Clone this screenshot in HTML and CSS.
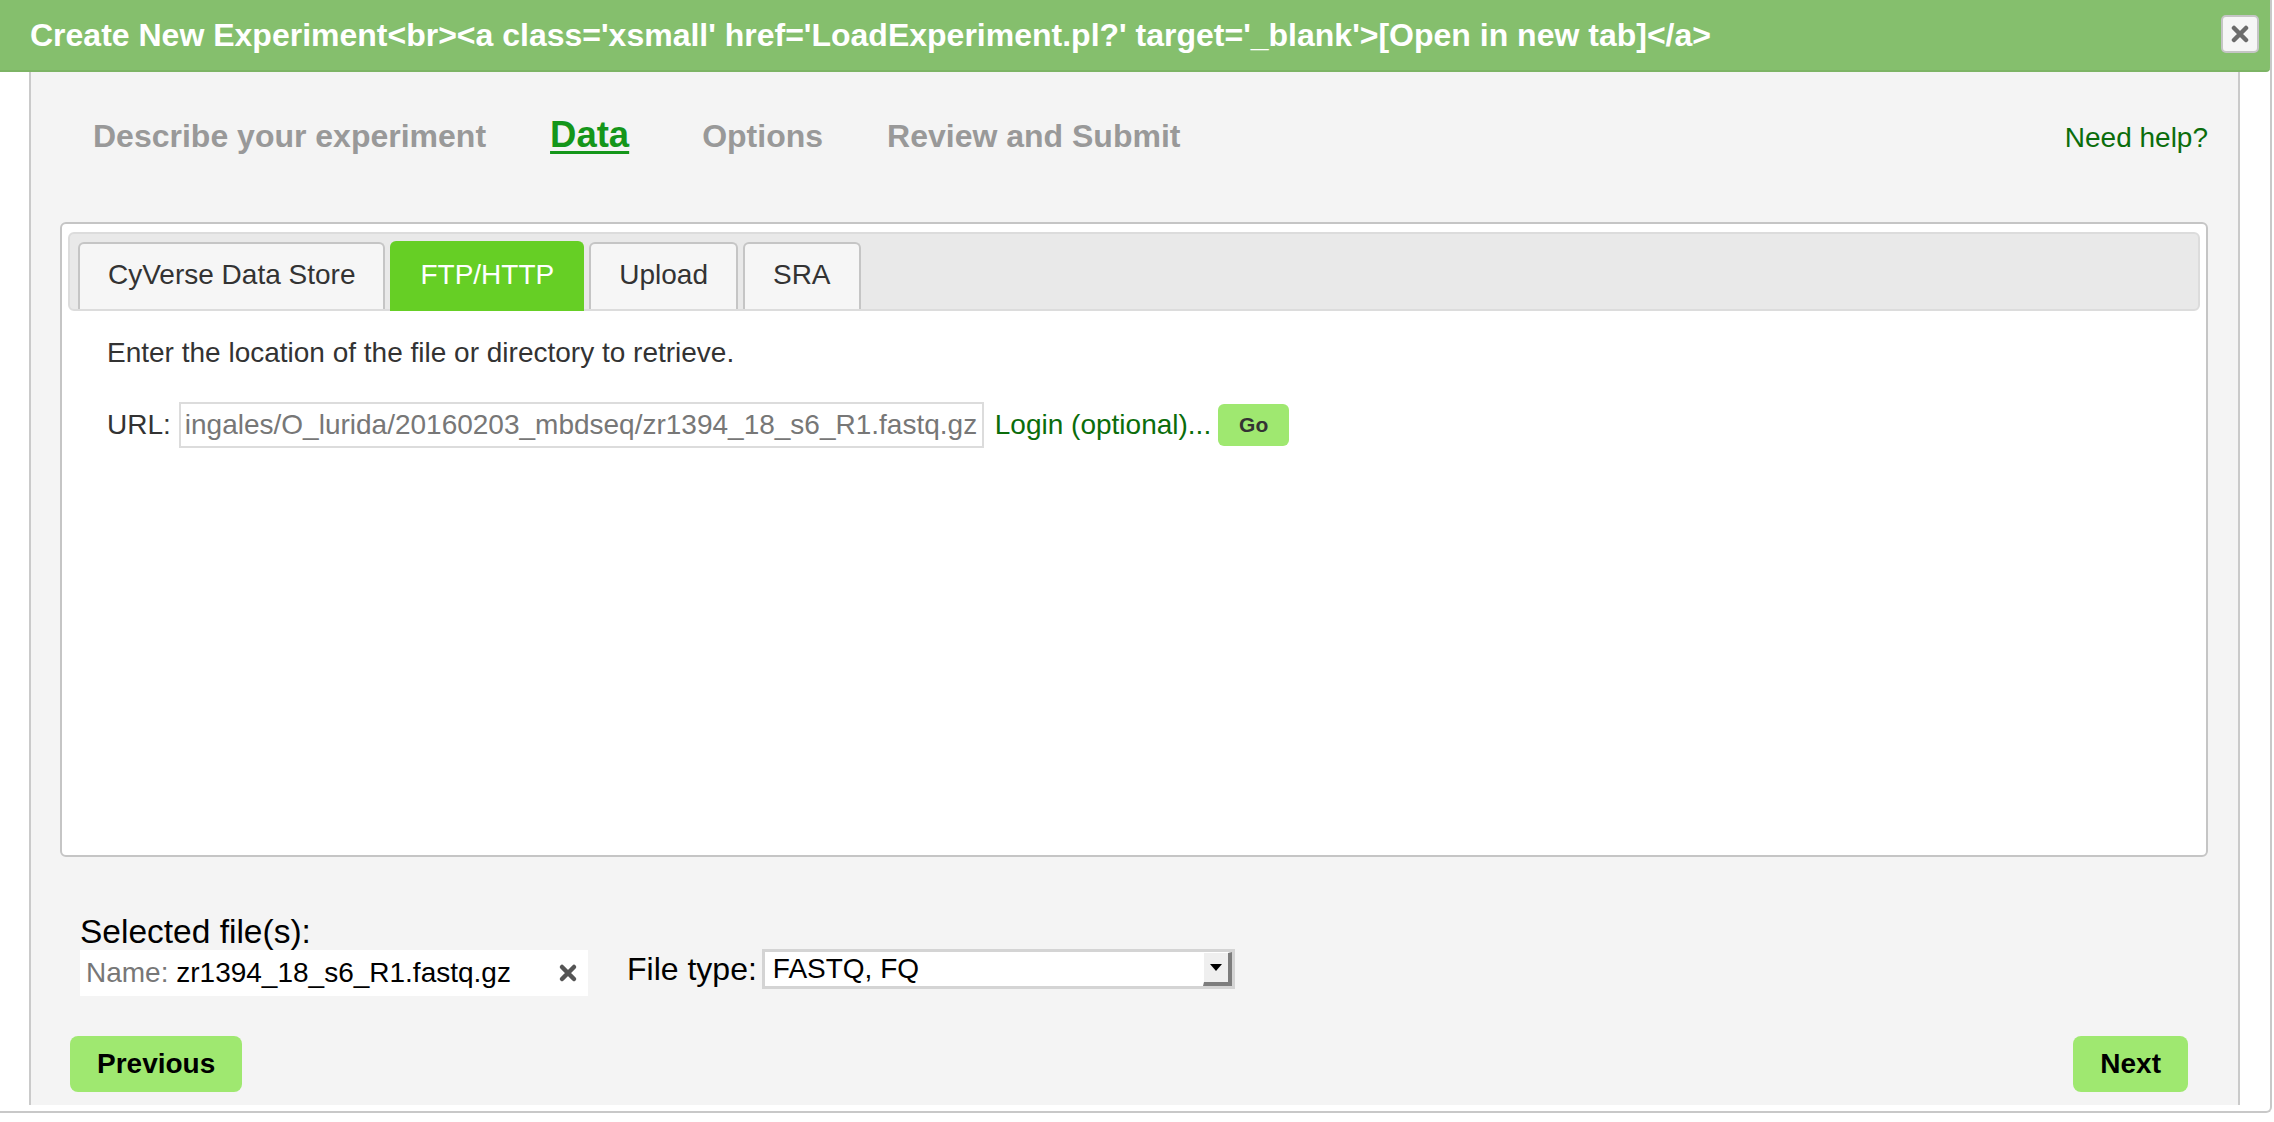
FILE: index.html
```html
<!DOCTYPE html>
<html>
<head>
<meta charset="utf-8">
<title>Create New Experiment</title>
<link rel="stylesheet" href="styles.css">
</head>
<body>
<div class="dialog">
  <div class="titlebar">
    <span class="title">Create New Experiment&lt;br&gt;&lt;a class='xsmall' href='LoadExperiment.pl?' target='_blank'&gt;[Open in new tab]&lt;/a&gt;</span>
    <button class="close" type="button" aria-label="close">
      <svg width="18" height="18" viewBox="0 0 18 18"><path d="M3 3 L15 15 M15 3 L3 15" stroke="#6b6b6b" stroke-width="4.5" stroke-linecap="round"/></svg>
    </button>
  </div>
  <div class="content">
    <div class="steps">
      <span class="step step-describe">Describe your experiment</span>
      <span class="step step-active">Data</span>
      <span class="step step-options">Options</span>
      <span class="step">Review and Submit</span>
      <span class="help">Need help?</span>
    </div>
    <div class="tabs">
      <ul class="tabnav">
        <li class="tab">CyVerse Data Store</li>
        <li class="tab tab-active">FTP/HTTP</li>
        <li class="tab">Upload</li>
        <li class="tab">SRA</li>
      </ul>
      <div class="panel">
        <p class="intro">Enter the location of the file or directory to retrieve.</p>
        <div class="urlrow">
          <span class="urllabel">URL:</span>
          <div class="urlinput">ingales/O_lurida/20160203_mbdseq/zr1394_18_s6_R1.fastq.gz</div>
          <span class="login">Login (optional)...</span>
          <button class="go" type="button">Go</button>
        </div>
      </div>
    </div>
    <div class="selected">Selected file(s):</div>
    <div class="filerow">
      <div class="namebox">
        <span class="namelabel">Name:</span>&nbsp;<span class="filename">zr1394_18_s6_R1.fastq.gz</span>
        <svg class="remove" width="20" height="20" viewBox="0 0 20 20"><path d="M4 4 L16 16 M16 4 L4 16" stroke="#555" stroke-width="4.5" stroke-linecap="round"/></svg>
      </div>
      <span class="typelabel">File type:</span>
      <div class="select">
        <span class="selvalue">FASTQ, FQ</span>
        <span class="selarrow"><span class="tri"></span></span>
      </div>
    </div>
    <div class="buttons">
      <button class="btn" type="button">Previous</button>
      <button class="btn" type="button">Next</button>
    </div>
  </div>
</div>
</body>
</html>
```
FILE: styles.css
```css
* { box-sizing: border-box; }
html, body { margin: 0; padding: 0; background: #fff; }
body { font-family: "Liberation Sans", Arial, Helvetica, sans-serif; color: #333; }

.dialog {
  width: 2272px;
  height: 1113px;
  display: flex;
  flex-direction: column;
  border-right: 2px solid #c8c8c8;
  border-bottom: 2px solid #c8c8c8;
  border-bottom-right-radius: 6px;
}

.titlebar {
  height: 72px;
  flex: none;
  background: #85bf6d;
  border-bottom: 2px solid #7db465;
  border-bottom-right-radius: 4px;
  display: flex;
  align-items: center;
  justify-content: space-between;
  padding: 0 11px 0 30px;
}
.title { color: #fff; font-weight: bold; font-size: 32px; white-space: nowrap; }
.close {
  width: 38px; height: 38px;
  margin-top: -2px;
  background: #f6f6f6;
  border: 2px solid #c5c5c5;
  border-radius: 5px;
  display: flex; align-items: center; justify-content: center;
  padding: 0;
}

.content {
  flex: 1;
  margin: 0 30px 6px 29px;
  background: #f4f4f4;
  border-left: 2px solid #cacaca;
  border-right: 2px solid #cacaca;
  padding: 0 30px 0 29px;
}

.steps {
  display: flex;
  align-items: baseline;
  padding: 42px 0 0 33px;
}
.step { font-size: 32px; font-weight: bold; color: #999; margin-right: 64px; white-space: nowrap; }
.step-active { font-size: 36.5px; color: #14961a; text-decoration: underline; text-decoration-thickness: 3px; text-underline-offset: 4px; margin-right: 73px; }
.help { margin-left: auto; font-size: 28px; color: #0b6d0b; }

.tabs {
  margin-top: 66px;
  height: 635px;
  background: #fff;
  border: 2px solid #c5c5c5;
  border-radius: 6px;
  padding: 8px 6px 6px;
  display: flex;
  flex-direction: column;
}
.tabnav {
  list-style: none;
  margin: 0;
  padding: 7px 8px 0;
  display: flex;
  align-items: flex-end;
  background: #e9e9e9;
  border: 2px solid #dcdcdc;
  border-radius: 6px;
}
.tab {
  font-size: 28px;
  line-height: 37px;
  padding: 12px 28px 16px;
  margin-right: 5px;
  background: #f6f6f6;
  border: 2px solid #c5c5c5;
  border-bottom: 0;
  border-radius: 6px 6px 0 0;
  color: #333;
  white-space: nowrap;
}
.tab-active {
  background: #66cf25;
  border-color: #66cf25;
  color: #fff;
  margin-bottom: -2px;
  padding-bottom: 18px;
  padding-top: 13px;
}

.panel { flex: 1; padding: 26px 39px; }
.intro { margin: 0; font-size: 28px; line-height: 32px; }
.urlrow { display: flex; align-items: center; margin-top: 33px; font-size: 28px; }
.urllabel { margin-right: 8px; }
.urlinput {
  width: 805px; height: 46px;
  border: 2px solid #dcdcdc;
  background: #fff;
  color: #777;
  padding: 0 4px;
  line-height: 42px;
  white-space: nowrap;
  overflow: hidden;
}
.login { color: #0b6d0b; margin-left: 11px; margin-right: 7px; }
.go {
  width: 71px; height: 42px;
  background: #9fe870;
  border: 0;
  border-radius: 6px;
  font-family: inherit;
  font-weight: bold;
  font-size: 21px;
  color: #333;
  padding: 0;
}

.selected { margin: 56px 0 0 20px; font-size: 33.5px; color: #000; line-height: 37px; }
.filerow { display: flex; align-items: flex-start; margin-left: 20px; margin-top: 0; }
.namebox {
  width: 508px; height: 46px;
  background: #fff;
  display: flex; align-items: center;
  padding: 0 10px 0 6px;
  font-size: 28px;
  color: #000;
}
.namelabel { color: #777; }
.remove { margin-left: auto; }
.typelabel { margin-left: 39px; margin-right: 5px; font-size: 32px; line-height: 40px; color: #000; margin-top: -1px; }
.select {
  width: 473px; height: 40px;
  margin-top: -1px;
  border: 3px solid #d4d4d4;
  background: #fff;
  display: flex;
}
.selvalue { flex: 1; padding-left: 8px; font-size: 28px; line-height: 34px; color: #000; }
.selarrow {
  width: 29px;
  background: #efefef;
  border-top: 1px solid #fff;
  border-left: 1px solid #fff;
  border-right: 4px solid #7d7d7d;
  border-bottom: 4px solid #7d7d7d;
  display: flex; align-items: center; justify-content: center;
}
.tri { width: 0; height: 0; border-left: 6px solid transparent; border-right: 6px solid transparent; border-top: 7px solid #000; }

.buttons { display: flex; justify-content: space-between; margin: 40px 20px 0 10px; }
.btn {
  height: 56px;
  padding: 0 27px;
  background: #9fe870;
  border: 0;
  border-radius: 8px;
  font-family: inherit;
  font-weight: bold;
  font-size: 28px;
  color: #000;
}
```
